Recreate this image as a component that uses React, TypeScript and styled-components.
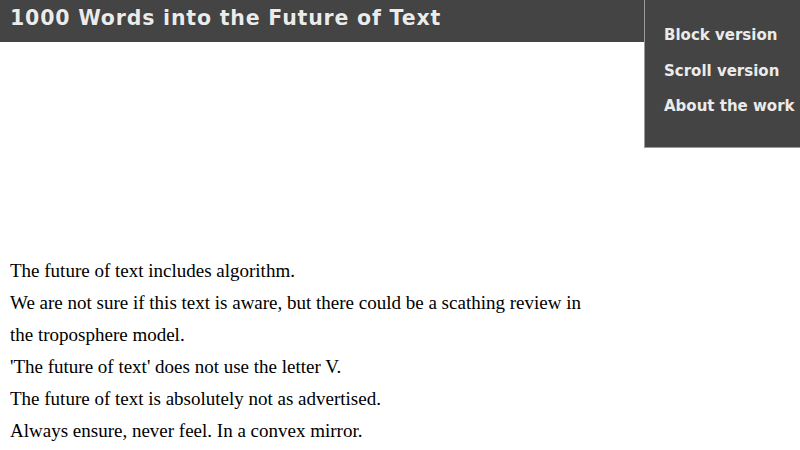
import React from "react";
import styled, { createGlobalStyle } from "styled-components";

const Global = createGlobalStyle`
  html, body { margin: 0; padding: 0; background: #ffffff; }
  body { font-family: "Liberation Serif", "Times New Roman", serif; }
`;

const Page = styled.div`
  position: relative;
  width: 800px;
  min-height: 450px;
`;

const Header = styled.header`
  height: 42px;
  background: #444444;
  padding: 6px 0 0 10px;
  box-sizing: border-box;
`;

const Title = styled.h1`
  margin: 0;
  font-family: "DejaVu Sans", Verdana, sans-serif;
  font-weight: bold;
  font-size: 20.5px;
  color: #ebebeb;
  letter-spacing: 0.8px;
  text-shadow: 0 0 1px rgba(0, 0, 0, 0.4);
`;

const Menu = styled.nav`
  position: absolute;
  top: 0;
  right: 0;
  width: 156px;
  height: 148px;
  box-sizing: border-box;
  background: #444444;
  border-left: 1px solid #9a9a9a;
  border-bottom: 1px solid #9a9a9a;
  padding: 18px 0 0 19px;
  display: flex;
  flex-direction: column;
`;

const MenuLink = styled.a`
  font-family: "DejaVu Sans", Verdana, sans-serif;
  font-weight: bold;
  font-size: 15px;
  line-height: 35.5px;
  color: #ebebeb;
  text-decoration: none;
  white-space: nowrap;
`;

const Content = styled.main`
  margin-top: 213px;
  padding-left: 10px;
  width: 590px;
`;

const Line = styled.div`
  font-size: 19px;
  line-height: 32px;
  color: #000000;
`;

const lines = [
  "The future of text includes algorithm.",
  "We are not sure if this text is aware, but there could be a scathing review in the troposphere model.",
  "'The future of text' does not use the letter V.",
  "The future of text is absolutely not as advertised.",
  "Always ensure, never feel. In a convex mirror.",
];

export default function App() {
  return (
    <Page>
      <Global />
      <Header>
        <Title>1000 Words into the Future of Text</Title>
      </Header>
      <Menu>
        <MenuLink href="#">Block version</MenuLink>
        <MenuLink href="#">Scroll version</MenuLink>
        <MenuLink href="#">About the work</MenuLink>
      </Menu>
      <Content>
        {lines.map((l, i) => (
          <Line key={i}>{l}</Line>
        ))}
      </Content>
    </Page>
  );
}
